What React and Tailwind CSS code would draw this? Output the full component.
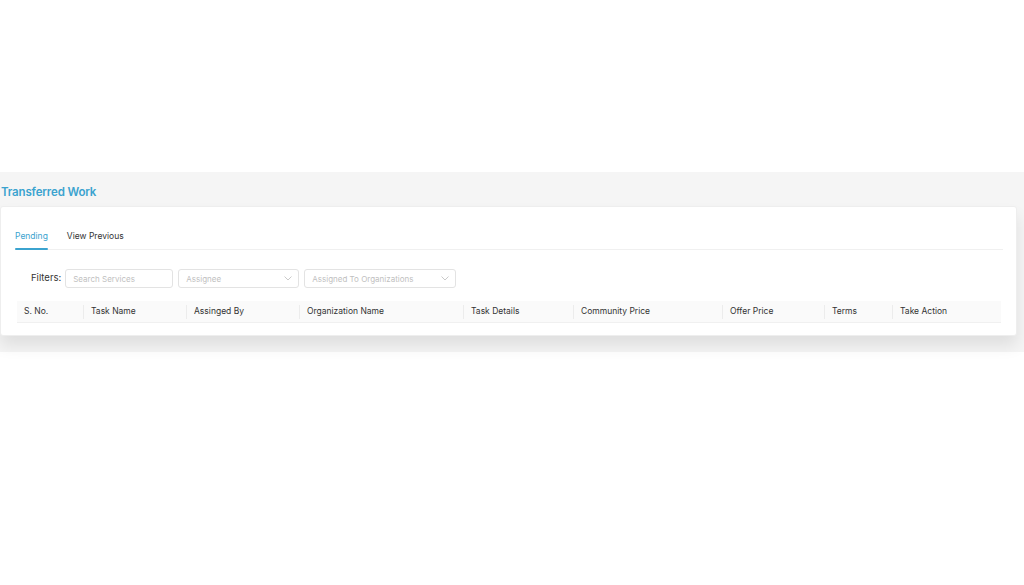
import React from "react";

const cols = [
  { label: "S. No.", w: "w-[66px]" },
  { label: "Task Name", w: "w-[103px]" },
  { label: "Assinged By", w: "w-[113px]" },
  { label: "Organization Name", w: "w-[164px]" },
  { label: "Task Details", w: "w-[110px]" },
  { label: "Community Price", w: "w-[149px]" },
  { label: "Offer Price", w: "w-[102px]" },
  { label: "Terms", w: "w-[68px]" },
  { label: "Take Action", w: "flex-1" },
];

function Chevron() {
  return (
    <svg width="8" height="5" viewBox="0 0 8 5" fill="none" className="text-[#c4c4c4]">
      <path d="M0.8 0.8 L4 4 L7.2 0.8" stroke="currentColor" strokeWidth="0.9" strokeLinecap="round" strokeLinejoin="round" />
    </svg>
  );
}

export default function App() {
  return (
    <div className="w-[1024px] h-[585px] bg-white overflow-hidden font-['Inter',sans-serif]">
      <div className="h-[172px]" />
      <div className="bg-[#f5f5f5] h-[180px] pr-[7px]">
        <div className="h-[34px] flex items-end pl-[1px] pb-[6px]">
          <h1 className="text-[11.5px] leading-[16px] font-semibold text-[#3ba3cf] tracking-[-0.15px]">Transferred Work</h1>
        </div>
        <div className="bg-white h-[130px] rounded-[3px] border border-[#eeeeee] shadow-[0_10px_16px_rgba(0,0,0,0.09)] pl-[14px] pr-[13px] pt-[22px]">
          <div className="flex items-end gap-[19px] border-b border-[#f0f0f0] h-[21px]">
            <div className="h-full flex flex-col justify-between">
              <span className="text-[8.5px] leading-[14px] text-[#3ba3cf]">Pending</span>
              <div className="h-[2px] bg-[#3ba3cf] rounded-full w-full mb-[-1px]" />
            </div>
            <div className="h-full flex flex-col">
              <span className="text-[8.5px] leading-[14px] text-[#333333]">View Previous</span>
            </div>
          </div>
          <div className="flex items-center mt-[19px] pl-[16px] gap-[5px] h-[19px]">
            <span className="text-[9.5px] text-[#333333] mr-[-1px]">Filters:</span>
            <div className="w-[108px] h-[19px] border border-[#e3e3e3] rounded-[3px] flex items-center px-[7px]">
              <span className="text-[8px] text-[#bfbfbf]">Search Services</span>
            </div>
            <div className="w-[121px] h-[19px] border border-[#e3e3e3] rounded-[3px] flex items-center justify-between pl-[7px] pr-[6px]">
              <span className="text-[8px] text-[#bfbfbf]">Assignee</span>
              <Chevron />
            </div>
            <div className="w-[152px] h-[19px] border border-[#e3e3e3] rounded-[3px] flex items-center justify-between pl-[7px] pr-[6px]">
              <span className="text-[8px] text-[#bfbfbf]">Assigned To Organizations</span>
              <Chevron />
            </div>
          </div>
          <div className="mt-[13px] ml-[2px] mr-[2px] h-[22px] bg-[#fafafa] border-b border-[#f0f0f0] flex items-center">
            {cols.map((c, i) => (
              <div
                key={c.label}
                className={`${c.w} h-[14px] flex items-center pl-[7px] ${i > 0 ? "border-l border-[#ececec]" : ""}`}
              >
                <span className="text-[8.5px] text-[#333333] whitespace-nowrap">{c.label}</span>
              </div>
            ))}
          </div>
        </div>
      </div>
    </div>
  );
}
